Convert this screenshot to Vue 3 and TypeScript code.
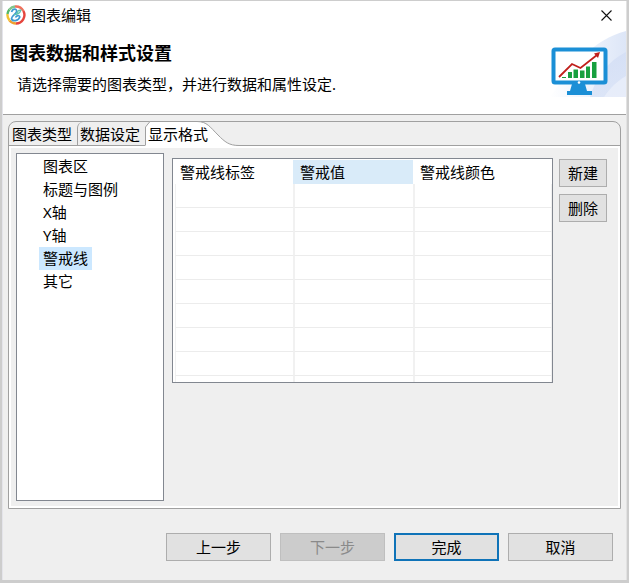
<script setup lang="ts">
import { ref } from 'vue'

const tabs: string[] = ['图表类型', '数据设定', '显示格式']
const activeTab = ref<number>(2)

const sections: string[] = ['图表区', '标题与图例', 'X轴', 'Y轴', '警戒线', '其它']
const activeSection = ref<string>('警戒线')

const columns: string[] = ['警戒线标签', '警戒值', '警戒线颜色']
const hotColumn = ref<number>(1)
const rowCount = 9
</script>

<template>
  <div class="desktop">
    <main class="dialog">
      <header class="head">
        <div class="titlebar">
          <svg class="app-icon" viewBox="0 0 20 20" aria-hidden="true">
            <g fill="none" stroke-width="2.4">
              <path d="M9 1.500A8.500 8.500 0 0 1 17.400 6" stroke="#f0705c" />
              <path d="M17.400 6A8.500 8.500 0 0 1 10 18.500" stroke="#e5453d" />
              <path d="M10 18.500A8.500 8.500 0 0 1 3.500 15.500" stroke="#f0a030" />
              <path d="M3.500 15.500A8.500 8.500 0 0 1 1.500 9" stroke="#f2c230" />
              <path d="M1.500 9A8.500 8.500 0 0 1 3.400 4.600" stroke="#56b86a" />
              <path d="M3.400 4.600A8.500 8.500 0 0 1 9 1.500" stroke="#7fc58a" />
            </g>
            <path d="M5.500 7C7 3.200 11 3.500 10.600 6.500C10 9.500 5.500 10.500 5.500 13.500C6.200 17 12.500 16 13.800 12C13.500 9.800 10.500 10.300 9.500 12.500" fill="none" stroke="#3f9ad2" stroke-width="1.700" />
            <path d="M8 9.500C11 9.500 14 8 14.800 5.200C12.500 5 11 7 10.500 10" fill="none" stroke="#5cc4b0" stroke-width="1.300" />
          </svg>
          <span class="caption">图表编辑</span>
          <button class="close" type="button" aria-label="关闭">
            <svg viewBox="0 0 11 11" aria-hidden="true">
              <path d="M.5 .5L10.500 10.500M10.500 .5L.5 10.500" stroke="#111" stroke-width="1.100" />
            </svg>
          </button>
        </div>
        <div class="banner">
          <div class="intro">
            <h1>图表数据和样式设置</h1>
            <p>请选择需要的图表类型，并进行数据和属性设定.</p>
          </div>
          <svg class="art" viewBox="0 0 76 66" aria-hidden="true">
            <defs>
              <linearGradient id="sweep" x1="0" y1="0" x2="1" y2="0">
                <stop offset="0" stop-color="#fff" />
                <stop offset=".5" stop-color="#eef3fc" />
                <stop offset="1" stop-color="#dde6f7" />
              </linearGradient>
              <linearGradient id="glow" x1="0" y1="0" x2="1" y2="1">
                <stop offset="0" stop-color="#c6d4f1" />
                <stop offset="1" stop-color="#dbe4f7" />
              </linearGradient>
            </defs>
            <path d="M0 66C20 36 44 8 76 0V66Z" fill="url(#sweep)" />
            <path d="M40 66C46 46 58 30 76 21V66Z" fill="url(#glow)" opacity=".6" />
            <path d="M54 66C60 57 67 50 76 45V66Z" fill="#ecf1fb" opacity=".7" />
            <rect x="3.500" y="18.500" width="52" height="33" rx="1.500" fill="#fff" stroke="#1b8fd6" stroke-width="4" />
            <path d="M22 53H35L37 60H42V64H17V60H20Z" fill="#1b8fd6" />
            <circle cx="29" cy="51.500" r="1.300" fill="#fff" />
            <path d="M12 46H16V47H12ZM18 41H22V47H18ZM23.500 38.500H28V47H23.500ZM30 39.500H34.500V47H30ZM36 35.500H40V47H36ZM42 31H46.500V47H42Z" fill="#18a03f" />
            <path d="M9 46L22 33L30.500 37L47 24" fill="none" stroke="#c0201c" stroke-width="1.800" />
            <path d="M50 21L48 27L44 22.500Z" fill="#c0201c" />
          </svg>
        </div>
      </header>

      <section class="folder">
        <div class="tabs" role="tablist">
          <button
            v-for="(tab, i) in tabs"
            :key="tab"
            type="button"
            role="tab"
            class="tab"
            :class="{ active: i === activeTab }"
            :aria-selected="i === activeTab"
            @click="activeTab = i"
          >
            <svg v-if="i === activeTab" class="tab-shape" viewBox="0 0 94 25" aria-hidden="true">
              <path d="M0 25V6L5 .5H52C62 .5 65 6 73 14C80 21 84 24.500 94 24.500V25Z" fill="#fff" />
              <path d="M.5 24.500V6L5 .5H52C62 .5 65 6 73 14C80 21 84 24.500 94 24.500" fill="none" stroke="#a0a0a0" />
            </svg>
            <span>{{ tab }}</span>
          </button>
        </div>

        <div class="page">
          <ul class="tree">
            <li v-for="s in sections" :key="s">
              <button type="button" :class="{ selected: s === activeSection }" @click="activeSection = s">{{ s }}</button>
            </li>
          </ul>
          <div class="editor">
            <div class="grid">
              <table>
                <thead>
                  <tr>
                    <th v-for="(c, i) in columns" :key="c" scope="col" :class="{ hot: i === hotColumn }">{{ c }}</th>
                  </tr>
                </thead>
                <tbody>
                  <tr v-for="r in rowCount" :key="r">
                    <td v-for="c in columns" :key="c"></td>
                  </tr>
                </tbody>
              </table>
            </div>
            <div class="actions">
              <button class="btn" type="button">新建</button>
              <button class="btn" type="button">删除</button>
            </div>
          </div>
        </div>
      </section>

      <footer class="foot">
        <button class="btn" type="button">上一步</button>
        <button class="btn" type="button" disabled>下一步</button>
        <button class="btn primary" type="button">完成</button>
        <button class="btn" type="button">取消</button>
      </footer>
    </main>
  </div>
</template>

<style>
body {
  background: #cdcdcd;
}
</style>

<style scoped>
* {
  box-sizing: border-box;
}

.desktop {
  display: flex;
  min-height: 100vh;
  padding: 1px 2px 3px;
  font-family: "Noto Sans", "Noto Sans CJK SC", sans-serif;
  font-size: 15px;
  line-height: 23px;
  color: #000;
}

button {
  font: inherit;
  color: inherit;
  padding: 0;
  border: 0;
  background: none;
}

.dialog {
  flex: 1;
  display: flex;
  flex-direction: column;
  min-width: 0;
  background: #efefef;
  border-left: 1px solid #e4e4ea;
  border-right: 1px solid #e2e2e2;
}

.head {
  height: 114px;
  background: #fff;
  border-bottom: 1px solid #a0a0a0;
}

.titlebar {
  display: flex;
  align-items: center;
  height: 28px;
  padding: 0 14px 0 3px;
}

.app-icon {
  width: 20px;
  height: 20px;
}

.caption {
  flex: 1;
  margin-left: 5px;
}

.close {
  display: flex;
}

.close svg {
  width: 11px;
  height: 11px;
}

.banner {
  display: flex;
  justify-content: space-between;
  padding-top: 2px;
}

.intro {
  padding: 10px 0 0 7px;
}

h1 {
  margin: 0;
  font-size: 18px;
  line-height: 24px;
  font-weight: 700;
}

p {
  margin: 8px 0 0 7px;
}

.art {
  width: 76px;
  height: 66px;
}

.folder {
  flex: 1;
  display: flex;
  flex-direction: column;
  margin: 6px 5px 0;
  border: 1px solid #a0a0a0;
  border-radius: 8px 8px 0 0;
}

.tabs {
  display: flex;
  height: 24px;
  border-bottom: 1px solid #a0a0a0;
}

.tab {
  position: relative;
  width: 68px;
  height: 24px;
  text-align: left;
  padding-left: 3px;
  white-space: nowrap;
}

.tab + .tab {
  padding-left: 2px;
  border-left: 1px solid #a0a0a0;
  border-top-left-radius: 6px;
}

.tab + .tab.active {
  padding-left: 3px;
  border-left: 0;
}

.tab span {
  position: relative;
}

.tab-shape {
  position: absolute;
  left: 0;
  top: -1px;
  width: 94px;
  height: 25px;
}

.page {
  flex: 1;
  display: flex;
  gap: 8px;
  padding: 5px 11px 5px 5px;
  border: 2px solid #fff;
}

.tree {
  width: 148px;
  margin: 0;
  padding: 1px 0 0 22px;
  list-style: none;
  background: #fff;
  border: 1px solid #828790;
}

.tree li {
  display: flex;
}

.tree button {
  height: 23px;
  padding: 0 4px;
}

.tree .selected {
  background: #cce8ff;
}

.editor {
  flex: 1;
  display: flex;
  align-items: flex-start;
  gap: 6px;
  padding-top: 5px;
}

.grid {
  flex: 1;
  padding: 1px 0 0 2px;
  background: #fff;
  border: 1px solid #828790;
}

table {
  width: 100%;
  table-layout: fixed;
  border-collapse: separate;
  border-spacing: 0;
}

th {
  width: 120px;
  height: 24px;
  padding: 0 0 0 7px;
  text-align: left;
  font-weight: 400;
}

th:first-child {
  width: 118px;
  padding-left: 5px;
}

th:last-child {
  width: auto;
}

th.hot {
  background: #d9ebf9;
}

td {
  height: 24px;
  padding: 0;
  border-left: 2px solid #f1f1f1;
  border-bottom: 1px solid #ececec;
}

td:first-child {
  border-left-width: 1px;
}

td:last-child {
  border-right: 1px solid #f1f1f1;
}

tr:last-child td {
  height: 6px;
  border-bottom: 0;
}

.btn {
  height: 28px;
  background: #e1e1e1;
  border: 1px solid #adadad;
}

.btn:disabled {
  color: #8a8a8a;
  background: #cccccc;
  border-color: #bfbfbf;
}

.btn.primary {
  border: 2px solid #0f73b8;
}

.actions {
  display: flex;
  flex-direction: column;
  gap: 7px;
  width: 48px;
  padding-top: 1px;
}

.foot {
  display: flex;
  justify-content: flex-end;
  gap: 9px;
  padding: 24px 13px 19px;
}

.foot .btn {
  width: 105px;
}
</style>
